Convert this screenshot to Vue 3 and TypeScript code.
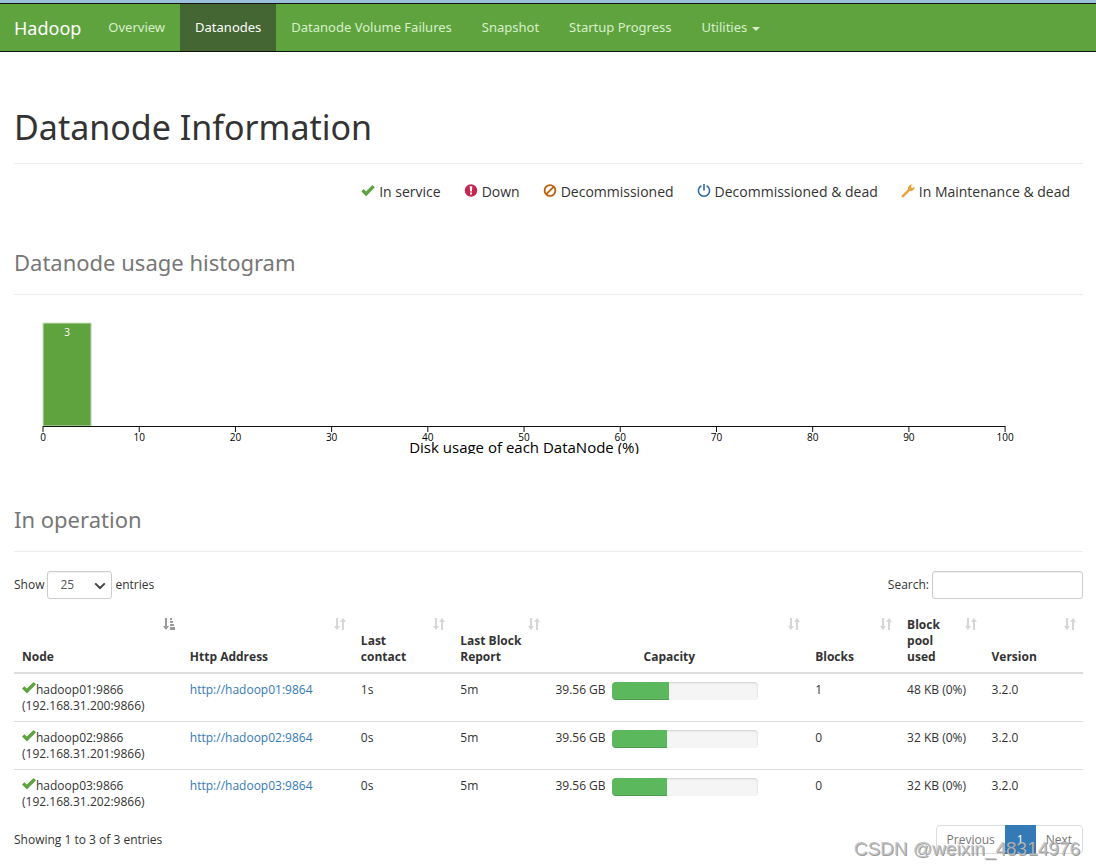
<script setup lang="ts">
import { ref } from 'vue'

interface DataNode {
  host: string
  ip: string
  http: string
  contact: string
  report: string
  capacity: string
  usedPct: number
  blocks: number
  pool: string
  version: string
}

const navItems = ['Overview', 'Datanodes', 'Datanode Volume Failures', 'Snapshot', 'Startup Progress']
const active = ref('Datanodes')
const pageSize = ref('25')
const query = ref('')
const ticks = [0, 10, 20, 30, 40, 50, 60, 70, 80, 90, 100]

const columns = [
  { label: 'Node', cls: 'c-node' },
  { label: 'Http Address', cls: 'c-http' },
  { label: 'Last contact', cls: 'c-contact' },
  { label: 'Last Block Report', cls: 'c-report' },
  { label: 'Capacity', cls: 'c-capacity' },
  { label: 'Blocks', cls: 'c-blocks' },
  { label: 'Block pool used', cls: 'c-pool' },
  { label: 'Version', cls: 'c-version' },
]

const nodes: DataNode[] = [
  { host: 'hadoop01:9866', ip: '(192.168.31.200:9866)', http: 'http://hadoop01:9864', contact: '1s', report: '5m', capacity: '39.56 GB', usedPct: 39, blocks: 1, pool: '48 KB (0%)', version: '3.2.0' },
  { host: 'hadoop02:9866', ip: '(192.168.31.201:9866)', http: 'http://hadoop02:9864', contact: '0s', report: '5m', capacity: '39.56 GB', usedPct: 38, blocks: 0, pool: '32 KB (0%)', version: '3.2.0' },
  { host: 'hadoop03:9866', ip: '(192.168.31.202:9866)', http: 'http://hadoop03:9864', contact: '0s', report: '5m', capacity: '39.56 GB', usedPct: 38, blocks: 0, pool: '32 KB (0%)', version: '3.2.0' },
]
</script>

<template>
  <div class="page">
    <header class="navbar">
      <a class="brand" href="#">Hadoop</a>
      <nav class="links">
        <a v-for="item in navItems" :key="item" href="#" :class="{ active: item === active }" @click.prevent="active = item">{{ item }}</a>
        <a href="#">Utilities <span class="caret"></span></a>
      </nav>
    </header>

    <main class="content">
      <h1>Datanode Information</h1>

      <ul class="legend">
        <li>
          <svg class="icon" viewBox="0 0 14 14"><path d="M.4 7.4 2.6 5.1 5.1 7.4 11.4 1 13.8 3.3 5.2 12.2Z" fill="#5fa33e" /></svg>
          In service
        </li>
        <li>
          <svg class="icon" viewBox="0 0 14 14"><circle cx="7" cy="6.5" r="6.2" fill="#c7254e" /><path d="M5.7 2.3h2.6L7.9 7.6H6.1ZM6 8.6h2v2H6Z" fill="#fff" /></svg>
          Down
        </li>
        <li>
          <svg class="icon" viewBox="0 0 14 14"><g fill="none" stroke="#bc5f0a" stroke-width="1.8"><circle cx="7" cy="6.5" r="5.4" /><path d="M3.3 10.2 10.7 2.8" /></g></svg>
          Decommissioned
        </li>
        <li>
          <svg class="icon" viewBox="0 0 14 14"><g fill="none" stroke="#2e6da4" stroke-width="1.6"><path d="M4.4 1.7A5.6 5.6 0 1 0 9.6 1.7M7 0V6.5" /></g></svg>
          Decommissioned &amp; dead
        </li>
        <li>
          <svg class="icon" viewBox="0 0 14 14"><path d="M.7 11.5 7 5.3C6.5 2.7 8.4.1 11.6.4L9.9 2.1 10.2 3.8 12 4.1 13.6 2.5C14 5.5 11.5 7.4 8.8 6.9L2.5 13.2C1.4 14 0 12.6.7 11.5Z" fill="#eea236" /></svg>
          In Maintenance &amp; dead
        </li>
      </ul>

      <h3 class="hist-title">Datanode usage histogram</h3>

      <svg class="chart" role="img" aria-label="Disk usage of each DataNode">
        <svg x="29" y="0" width="90%" height="144" overflow="visible">
          <rect x="0" y="13" width="5%" height="103" fill="#5fa33e" stroke="#cfe3c5" stroke-width="1" />
          <text class="count" x="2.5%" y="26">3</text>
          <line x1="0" x2="100%" y1="116.5" y2="116.5" class="axis" />
          <g v-for="t in ticks" :key="t">
            <line :x1="t + '%'" :x2="t + '%'" y1="116" y2="122" class="axis" />
            <text class="tick" :x="t + '%'" y="131">{{ t }}</text>
          </g>
          <text class="axis-title" x="50%" y="143">Disk usage of each DataNode (%)</text>
        </svg>
      </svg>

      <h3 class="op-title">In operation</h3>

      <div class="controls">
        <label>Show
          <span class="select-wrap">
            <select v-model="pageSize">
              <option>10</option>
              <option>25</option>
              <option>50</option>
              <option>100</option>
            </select>
            <svg class="chevron" viewBox="0 0 12 8"><path d="M1.2 1.4 6 6 10.8 1.4" fill="none" stroke="#444" stroke-width="2" /></svg>
          </span>
          entries
        </label>
        <label>Search: <input v-model="query" type="text" /></label>
      </div>

      <table>
        <thead>
          <tr>
            <th v-for="(c, i) in columns" :key="c.label" :class="c.cls" scope="col">
              <span>{{ c.label }}</span>
              <svg v-if="i === 0" class="sort sorted" viewBox="0 0 12 12"><path d="M2 0h2v8h2L3 12 0 8h2ZM7 0h2v2H7ZM7 3h3v2H7ZM7 6h4v2H7ZM7 9h5v3H7Z" /></svg>
              <svg v-else class="sort" viewBox="0 0 12 12"><path d="M2 0h2v8h2L3 12 0 8h2ZM9 0l3 4h-2v8H8V4H6Z" /></svg>
            </th>
          </tr>
        </thead>
        <tbody>
          <tr v-for="n in nodes" :key="n.host">
            <td><svg class="check" viewBox="0 0 14 12"><path d="M0 6.6 2.4 4.2 4.9 6.6 11.6 0 14 2.3 5 11.6Z" fill="#5fa33e" /></svg>{{ n.host }}<br />{{ n.ip }}</td>
            <td><a href="#">{{ n.http }}</a></td>
            <td>{{ n.contact }}</td>
            <td>{{ n.report }}</td>
            <td>
              <div class="capacity">
                <span>{{ n.capacity }}</span>
                <div class="progress"><div class="bar" :style="{ width: n.usedPct + '%' }"></div></div>
              </div>
            </td>
            <td>{{ n.blocks }}</td>
            <td>{{ n.pool }}</td>
            <td>{{ n.version }}</td>
          </tr>
        </tbody>
      </table>

      <footer class="foot">
        <span>Showing 1 to 3 of 3 entries</span>
        <div class="pager">
          <button type="button">Previous</button>
          <button type="button" class="current">1</button>
          <button type="button">Next</button>
        </div>
      </footer>
    </main>
    <div class="watermark">CSDN @weixin_48314976</div>
  </div>
</template>

<style>
body {
  background: #fff;
}
</style>

<style scoped>
* {
  box-sizing: border-box;
}
.page {
  position: relative;
  min-height: 100vh;
  border-top: 3px solid #9bc0dc;
  font-family: "Open Sans", "Noto Sans", sans-serif;
  font-size: 12px;
  line-height: 16px;
  color: #333;
}
.navbar {
  display: flex;
  height: 49px;
  background: #5fa33e;
  border-top: 1px solid #111;
  border-bottom: 1px solid #111;
  font-family: "Noto Sans", "Open Sans", sans-serif;
}
.navbar a {
  text-decoration: none;
  line-height: 20px;
  white-space: nowrap;
}
.brand {
  padding: 14px 12px 14px 14px;
  color: #fff;
  font-size: 18px;
}
.links {
  display: flex;
}
.links a {
  padding: 13px 15px;
  color: #d8f0cb;
  font-size: 13px;
}
.links a.active {
  background: #446633;
  color: #fff;
}
.caret {
  display: inline-block;
  margin-left: 1px;
  vertical-align: middle;
  border-top: 4px solid currentColor;
  border-left: 4px solid transparent;
  border-right: 4px solid transparent;
}
.content {
  padding: 0 13px 0 14px;
}
h1,
h3 {
  margin: 0;
  font-family: "Noto Sans", "Open Sans", sans-serif;
  font-weight: 400;
  border-bottom: 1px solid #eee;
}
h1 {
  padding: 55px 0 16px;
  font-size: 34px;
  line-height: 40px;
}
h3 {
  color: #777;
  font-size: 22px;
  line-height: 26px;
  padding-bottom: 19px;
}
.legend {
  display: flex;
  justify-content: flex-end;
  gap: 23px;
  margin: 18px 0 0;
  padding: 0 13px 0 0;
  list-style: none;
  font-size: 14px;
  line-height: 20px;
}
.legend li {
  display: flex;
  align-items: center;
  gap: 4px;
  white-space: nowrap;
}
.icon {
  width: 14px;
  height: 14px;
  margin-bottom: 2px;
}
.hist-title {
  margin-top: 47px;
}
.chart {
  display: block;
  width: 100%;
  height: 144px;
  margin-top: 15px;
  overflow: hidden;
}
.axis {
  stroke: #111;
  stroke-width: 1;
}
.tick,
.count,
.axis-title {
  text-anchor: middle;
  font-size: 10px;
  fill: #000;
}
.count {
  fill: #fff;
}
.axis-title {
  font-size: 15px;
}
.op-title {
  margin-top: 52px;
}
.controls {
  display: flex;
  justify-content: space-between;
  margin-top: 19px;
}
.controls label {
  display: flex;
  align-items: center;
  gap: 3px;
  height: 28px;
}
.select-wrap {
  position: relative;
  display: block;
}
select,
input {
  height: 28px;
  border: 1px solid #ccc;
  border-radius: 3px;
  background: #fff;
  color: #555;
  font: inherit;
  box-shadow: inset 0 1px 1px rgba(0, 0, 0, 0.06);
}
select {
  display: block;
  width: 65px;
  padding: 0 12px;
  appearance: none;
}
input {
  width: 151px;
  padding: 0 10px;
}
.chevron {
  position: absolute;
  right: 6px;
  top: 11px;
  width: 12px;
  height: 8px;
  pointer-events: none;
}
table {
  width: 100%;
  margin-top: 10px;
  table-layout: fixed;
  border-collapse: separate;
  border-spacing: 0;
}
th {
  position: relative;
  padding: 8px 24px 7px 8px;
  border-bottom: 2px solid #ddd;
  text-align: left;
  vertical-align: bottom;
}
td {
  padding: 8px 8px 7px;
  border-top: 1px solid #ddd;
  vertical-align: top;
  white-space: nowrap;
}
tbody tr:first-child td {
  border-top: 0;
}
td a {
  color: #337ab7;
  text-decoration: none;
}
.c-node { width: 15.7%; }
.c-http { width: 16%; }
.c-contact { width: 9.3%; padding-right: 30px; }
.c-report { width: 8.9%; }
.c-capacity { width: 24.3%; text-align: center; }
.c-blocks { width: 8.6%; }
.c-pool { width: 7.9%; padding-right: 30px; }
.c-version { width: 9.3%; }
.sort {
  position: absolute;
  right: 7px;
  top: 9px;
  width: 12px;
  height: 12px;
  fill: #d6d6d6;
}
.sort.sorted {
  fill: #999;
}
.check {
  width: 14px;
  height: 12px;
}
.capacity {
  display: flex;
  align-items: flex-start;
  gap: 6px;
}
.progress {
  width: 60%;
  height: 18px;
  overflow: hidden;
  border-radius: 4px;
  background: #f5f5f5;
  box-shadow: inset 0 1px 2px rgba(0, 0, 0, 0.15);
}
.bar {
  height: 100%;
  background: #5cb85c;
  box-shadow: inset 0 -1px 0 rgba(0, 0, 0, 0.15);
}
.foot {
  display: flex;
  justify-content: space-between;
  align-items: center;
  margin-top: 8px;
}
.pager {
  display: flex;
  border: 1px solid #ddd;
  border-radius: 4px;
}
.pager button {
  height: 27px;
  padding: 0 10px;
  border: 0;
  background: none;
  color: #777;
  font: inherit;
}
.pager .current {
  height: 29px;
  margin: -1px 0;
  padding: 0 12px;
  background: #337ab7;
  color: #fff;
}
.watermark {
  position: absolute;
  right: 16px;
  bottom: 8px;
  font-family: "Liberation Sans", Arial, sans-serif;
  font-size: 19px;
  line-height: 22px;
  color: rgba(190, 190, 190, 0.85);
  text-shadow: 1px 1px 0 rgba(90, 90, 90, 0.6);
  pointer-events: none;
}
</style>
